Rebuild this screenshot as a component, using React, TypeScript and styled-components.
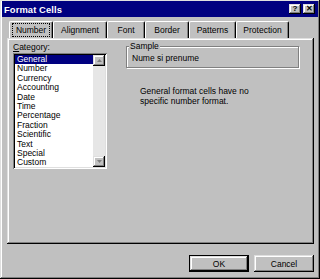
import React from "react";
import styled, { createGlobalStyle } from "styled-components";

const GlobalStyle = createGlobalStyle`
  html, body {
    margin: 0;
    padding: 0;
    background: #c0c0c0;
  }
  body {
    font-family: "Liberation Sans", Arial, sans-serif;
    font-size: 8.5px;
    color: #000;
  }
`;

const raised = `
  box-shadow: inset -1px -1px #000, inset 1px 1px #dfdfdf,
    inset -2px -2px #808080, inset 2px 2px #fff;
`;

const sunken = `
  box-shadow: inset 1px 1px #808080, inset -1px -1px #fff,
    inset 2px 2px #000, inset -2px -2px #dfdfdf;
`;

const Window = styled.div`
  box-sizing: border-box;
  width: 320px;
  height: 279px;
  padding: 1px 2px 2px 2px;
  display: flex;
  flex-direction: column;
  background: #c0c0c0;
  ${raised}
`;

const TitleBar = styled.div`
  height: 16px;
  display: flex;
  align-items: center;
  justify-content: space-between;
  padding: 0 3px 0 2px;
  background: #000080;
  color: #fff;
`;

const Title = styled.span`
  font-size: 9.4px;
  font-weight: bold;
  letter-spacing: 0.1px;
`;

const TitleButtons = styled.div`
  display: flex;
  gap: 2px;
`;

const TitleButton = styled.div`
  width: 12px;
  height: 10px;
  display: flex;
  align-items: center;
  justify-content: center;
  background: #c0c0c0;
  color: #000;
  font-size: 8px;
  font-weight: bold;
  line-height: 1;
  ${raised}
`;

const Body = styled.div`
  display: flex;
  flex-direction: column;
  padding: 4px 4px 0 5px;
`;

const TabStrip = styled.div`
  display: flex;
  height: 17px;
  padding-left: 2px;
`;

const Tab = styled.div<{ $w: number }>`
  box-sizing: border-box;
  width: ${(p) => p.$w}px;
  height: 17px;
  display: flex;
  align-items: center;
  justify-content: center;
  border-top: 1px solid #fff;
  border-left: 1px solid #fff;
  border-right: 1px solid #000;
  box-shadow: inset -1px 0 #808080;
  border-radius: 2px 2px 0 0;
`;

const TabLabel = styled.span<{ $focus?: boolean }>`
  padding: 1px 3px;
  outline: ${(p) => (p.$focus ? "1px dotted #000" : "none")};
`;

const Panel = styled.div`
  box-sizing: border-box;
  height: 206px;
  display: flex;
  padding: 5px 6px 0 6px;
  gap: 19px;
  ${raised}
`;

const LeftColumn = styled.div`
  display: flex;
  flex-direction: column;
  gap: 1px;
`;

const Label = styled.div`
  height: 9px;
  line-height: 9px;
`;

const ListBox = styled.div`
  box-sizing: border-box;
  width: 94px;
  height: 116px;
  padding: 2px;
  display: flex;
  background: #fff;
  ${sunken}
`;

const ListRows = styled.div`
  flex: 1;
  display: flex;
  flex-direction: column;
`;

const ListRow = styled.div<{ $selected?: boolean }>`
  height: 9.4px;
  line-height: 9.4px;
  padding-left: 2px;
  white-space: nowrap;
  background: ${(p) => (p.$selected ? "#000080" : "transparent")};
  color: ${(p) => (p.$selected ? "#fff" : "#000")};
`;

const ScrollBar = styled.div`
  width: 12px;
  display: flex;
  flex-direction: column;
  justify-content: space-between;
  background: #e6e6e6;
`;

const ScrollButton = styled.div`
  width: 12px;
  height: 11px;
  display: flex;
  align-items: center;
  justify-content: center;
  background: #c0c0c0;
  ${raised}
`;

const RightColumn = styled.div`
  display: flex;
  flex-direction: column;
`;

const GroupBox = styled.div`
  position: relative;
  box-sizing: border-box;
  width: 173px;
  height: 22px;
  margin-top: 3px;
  padding: 0 0 0 5px;
  border: 1px solid #808080;
  box-shadow: 1px 1px #fff, inset 1px 1px #fff;
  display: flex;
  align-items: center;
`;

const GroupLabel = styled.span`
  position: absolute;
  top: -6px;
  left: 2px;
  padding: 0 1px;
  line-height: 10px;
  background: #c0c0c0;
`;

const SampleText = styled.div`
  line-height: 10px;
  margin-top: 2px;
`;

const Description = styled.div`
  margin: 18px 0 0 14px;
  line-height: 10px;
`;

const ButtonRow = styled.div`
  display: flex;
  justify-content: flex-end;
  gap: 5px;
  margin-top: 11px;
`;

const Button = styled.div`
  box-sizing: border-box;
  width: 60px;
  height: 17px;
  display: flex;
  align-items: center;
  justify-content: center;
  background: #c0c0c0;
  ${raised}
`;

const DefaultButton = styled(Button)`
  border: 1px solid #000;
`;

const Arrow = ({ down }: { down?: boolean }) => (
  <svg width="5" height="3" viewBox="0 0 5 3">
    <path
      d={down ? "M0 0 H5 L2.5 3 Z" : "M0 3 H5 L2.5 0 Z"}
      fill="#808080"
    />
  </svg>
);

const tabs = [
  { label: "Number", w: 44 },
  { label: "Alignment", w: 54 },
  { label: "Font", w: 38 },
  { label: "Border", w: 44 },
  { label: "Patterns", w: 47 },
  { label: "Protection", w: 53 },
];

const categories = [
  "General",
  "Number",
  "Currency",
  "Accounting",
  "Date",
  "Time",
  "Percentage",
  "Fraction",
  "Scientific",
  "Text",
  "Special",
  "Custom",
];

export default function App() {
  return (
    <>
      <GlobalStyle />
      <Window>
        <TitleBar>
          <Title>Format Cells</Title>
          <TitleButtons>
            <TitleButton>?</TitleButton>
            <TitleButton>✕</TitleButton>
          </TitleButtons>
        </TitleBar>

        <Body>
          <TabStrip>
            {tabs.map((t, i) => (
              <Tab key={t.label} $w={t.w}>
                <TabLabel $focus={i === 0}>{t.label}</TabLabel>
              </Tab>
            ))}
          </TabStrip>

          <Panel>
            <LeftColumn>
              <Label>
                <u>C</u>ategory:
              </Label>
              <ListBox>
                <ListRows>
                  {categories.map((c, i) => (
                    <ListRow key={c} $selected={i === 0}>
                      {c}
                    </ListRow>
                  ))}
                </ListRows>
                <ScrollBar>
                  <ScrollButton>
                    <Arrow />
                  </ScrollButton>
                  <ScrollButton>
                    <Arrow down />
                  </ScrollButton>
                </ScrollBar>
              </ListBox>
            </LeftColumn>

            <RightColumn>
              <GroupBox>
                <GroupLabel>Sample</GroupLabel>
                <SampleText>Nume si prenume</SampleText>
              </GroupBox>
              <Description>
                General format cells have no
                <br />
                specific number format.
              </Description>
            </RightColumn>
          </Panel>

          <ButtonRow>
            <DefaultButton>OK</DefaultButton>
            <Button>Cancel</Button>
          </ButtonRow>
        </Body>
      </Window>
    </>
  );
}
